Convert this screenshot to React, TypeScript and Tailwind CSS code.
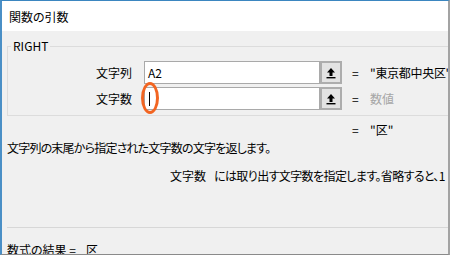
const font = {
  fontFamily: '"Noto Sans CJK JP", "Noto Sans", sans-serif',
  fontFeatureSettings: '"palt"',
};

function UpButton() {
  return (
    <div className="flex h-[23px] w-[22px] shrink-0 items-center justify-center border-2 border-[#adadad] bg-[#e3e3e3]">
      <svg width="10" height="12" viewBox="0 0 10 12">
        <path d="M5 1 L9 5.5 H6.5 V9 H3.5 V5.5 H1 Z" fill="#000" />
        <rect x="0.5" y="10" width="9" height="1.4" fill="#000" />
      </svg>
    </div>
  );
}

type ArgRowProps = {
  label: string;
  value?: string;
  result: string;
  muted?: boolean;
  cursor?: boolean;
};

function ArgRow({ label, value, result, muted, cursor }: ArgRowProps) {
  return (
    <div className="flex h-[23px] items-center">
      <div className="w-[125px] shrink-0 pr-[1px] text-right">{label}</div>
      <div className="relative ml-[11px] flex h-[23px] w-[176px] shrink-0 items-center border border-[#a9a9a9] bg-white pl-[3px]">
        {value}
        {cursor ? (
          <>
            <span className="ml-[1px] h-[14px] w-[1px] bg-black" />
            <span className="absolute left-[-4px] top-[-6px] h-[32px] w-[18px] rounded-[50%] border-[3px] border-[#f26522]" />
          </>
        ) : null}
      </div>
      <UpButton />
      <span className="ml-[10px] w-[18px] shrink-0">=</span>
      <span className={muted ? "whitespace-nowrap text-[#a6a6a6]" : "whitespace-nowrap tracking-[-0.3px]"}>{result}</span>
    </div>
  );
}

export default function App() {
  return (
    <div
      className="flex h-[255px] w-[450px] flex-col overflow-hidden border-t border-l-2 border-r-2 border-b border-t-[#3b86c0] border-l-[#4a8fc6] border-r-[#a3a3a3] border-b-[#8a8a8a] bg-[#f0f0f0] text-[12px] leading-[14px] text-black"
      style={font}
    >
      <div className="flex h-[30px] shrink-0 items-center bg-white pl-[7px] pt-[1px]">関数の引数</div>

      <div className="flex flex-col pl-[5px]">
        <fieldset className="mt-[8px] w-[470px] border border-[#dcdcdc] pb-[5px] pt-[8px]">
          <legend className="ml-[3px] px-[2px]">RIGHT</legend>
          <div className="flex flex-col gap-[3px]">
            <ArgRow label="文字列" value="A2" result={'"東京都中央区"'} />
            <ArgRow label="文字数" result="数値" muted cursor />
          </div>
        </fieldset>

        <div className="mt-[7px] flex pl-[345px]">
          <span className="w-[18px]">=</span>
          <span>"区"</span>
        </div>

        <div className="mt-[4px] whitespace-nowrap tracking-[-0.8px]">文字列の末尾から指定された文字数の文字を返します。</div>

        <div className="mt-[14px] flex whitespace-nowrap pl-[163px]">
          <span className="w-[44px] shrink-0">文字数</span>
          <span className="tracking-[-0.6px]">には取り出す文字数を指定します。省略すると、1</span>
        </div>

        <div className="mt-[44px] h-[1px] w-[460px] bg-[#d7d7d7]" />

        <div className="mt-[15px] flex whitespace-nowrap">
          <span>数式の結果 =</span>
          <span className="ml-[10px]">区</span>
        </div>
      </div>
    </div>
  );
}
